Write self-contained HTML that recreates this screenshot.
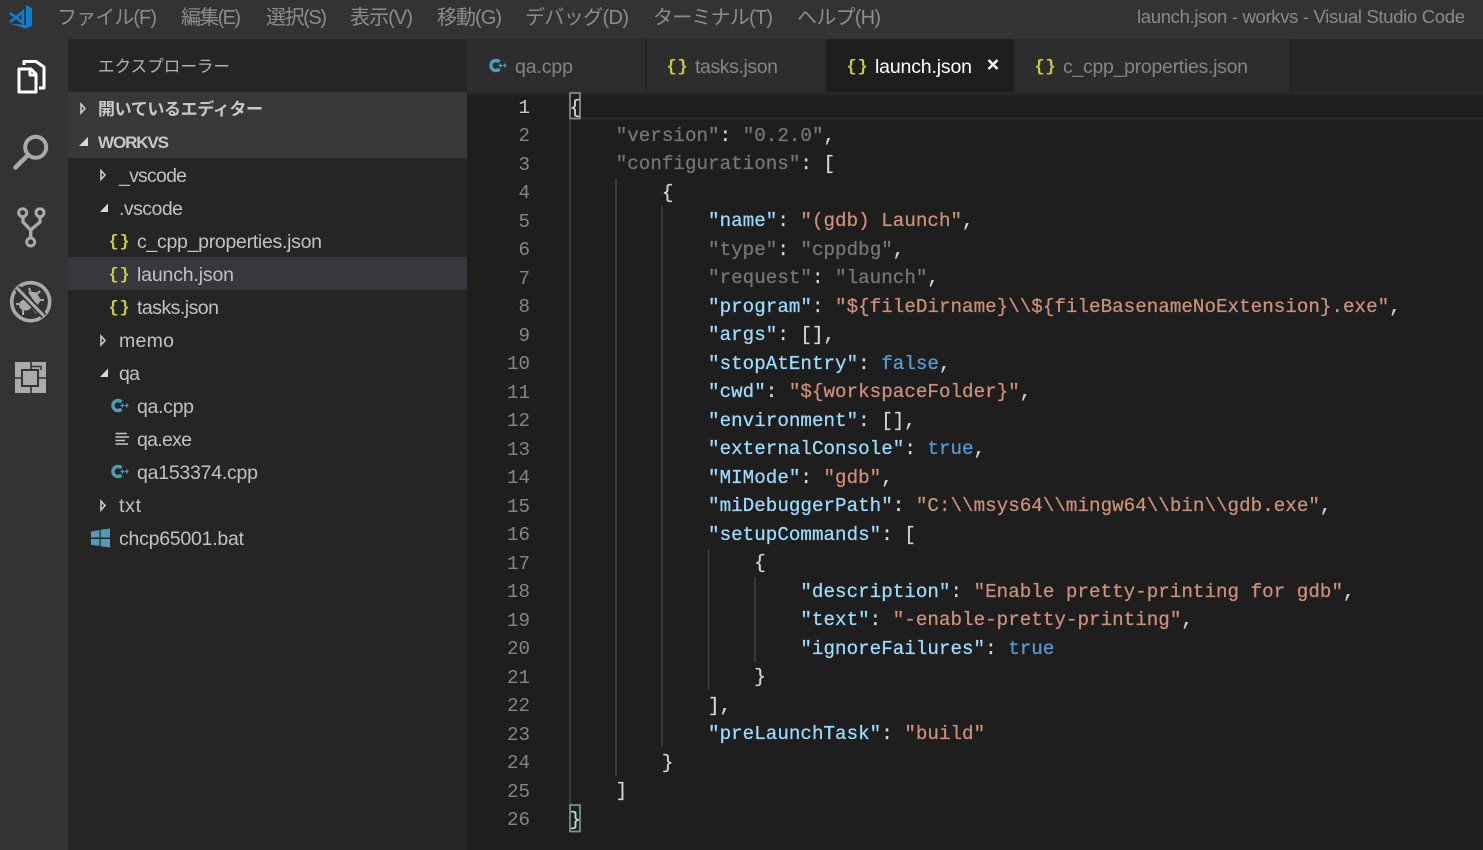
<!DOCTYPE html>
<html><head><meta charset="utf-8"><style>
html,body{margin:0;padding:0;background:#1e1e1e;width:1483px;height:850px;overflow:hidden}
svg{position:absolute;left:0;top:0}
.m{font:20px "Liberation Sans","Noto Sans CJK JP",sans-serif;fill:#8c8c8c}
.t{font:19.5px "Liberation Sans",sans-serif;fill:#c2c2c2}
.b{font:bold 17px "Liberation Sans","Noto Sans CJK JP",sans-serif;fill:#c8c8c8}
.tab{font:19.5px "Liberation Sans",sans-serif;fill:#858585}
.br{font:bold 17px "Liberation Mono",monospace;fill:#cbcb41}
.n{font:19.2px "Liberation Mono",monospace;fill:#858585;text-anchor:end}
pre{position:absolute;left:569.5px;top:93.5px;margin:0;font:19.2px/28.48px "Liberation Mono",monospace;letter-spacing:.03px;color:#d4d4d4;white-space:pre;-webkit-text-stroke:.25px}
i{font-style:normal;color:#9cdcfe}u{text-decoration:none;color:#ce9178}s{text-decoration:none;color:#777}b{font-weight:normal;color:#569cd6}
</style></head><body>
<svg width="1483" height="850" viewBox="0 0 1483 850">
<rect width="1483" height="850" fill="#1e1e1e"/>
<rect width="1483" height="39" fill="#333"/>
<rect y="39" width="68" height="811" fill="#333"/>
<rect x="68" y="39" width="399" height="811" fill="#252526"/>
<rect x="68" y="92" width="399" height="66" fill="#383838"/>
<rect x="68" y="257" width="399" height="33" fill="#37373d"/>
<rect x="467" y="39" width="1016" height="53" fill="#252526"/>
<rect x="467" y="39" width="178" height="53" fill="#2d2d2d"/>
<rect x="647" y="39" width="178" height="53" fill="#2d2d2d"/>
<rect x="827" y="39" width="186" height="53" fill="#1e1e1e"/>
<rect x="1015" y="39" width="274" height="53" fill="#2d2d2d"/>
<rect x="467" y="92" width="1016" height="3" fill="#282828"/>
<rect x="569" y="117" width="914" height="3" fill="#282828"/>

<!-- logo -->
<path d="M26 5 L32 8 V25.500 L26 28.500 L9 23.500 L26 25 Z" fill="#0e7fd0"/>
<path d="M10 13 L16 17.500 L10 22 M16 17.500 L23 11.500 V23 Z" fill="none" stroke="#0e7fd0" stroke-width="2.500"/>
<!-- menu -->
<g class="m">
<text x="57" y="24" textLength="100" lengthAdjust="spacing">ファイル(F)</text>
<text x="181" y="24" textLength="60" lengthAdjust="spacing">編集(E)</text>
<text x="266" y="24" textLength="61" lengthAdjust="spacing">選択(S)</text>
<text x="350" y="24" textLength="63" lengthAdjust="spacing">表示(V)</text>
<text x="437" y="24" textLength="65" lengthAdjust="spacing">移動(G)</text>
<text x="525" y="24" textLength="104" lengthAdjust="spacing">デバッグ(D)</text>
<text x="653" y="24" textLength="120" lengthAdjust="spacing">ターミナル(T)</text>
<text x="797" y="24" textLength="84" lengthAdjust="spacing">ヘルプ(H)</text>
</g>
<text x="1137" y="23" textLength="328" lengthAdjust="spacing" style="font:18.5px 'Liberation Sans',sans-serif;fill:#8a8a8a">launch.json - workvs - Visual Studio Code</text>

<!-- activity icons -->
<g fill="none" stroke="#fff" stroke-width="3">
<path d="M31 69 H19 V92 H36 V74 Z M30 69 V75 H36" stroke-linejoin="round"/>
<path d="M24 65 V61.500 H36 L44 67 V88 H39" stroke-linejoin="round"/>
</g>
<g fill="none" stroke="#a9a9a9">
<circle cx="35.700" cy="147.300" r="10.500" stroke-width="4"/>
<path d="M28 155 L15.500 167.500" stroke-width="4.500" stroke-linecap="round"/>
<circle cx="22.700" cy="212.700" r="4" stroke-width="3"/>
<circle cx="40" cy="212.700" r="4" stroke-width="3"/>
<circle cx="30.700" cy="242" r="4" stroke-width="3"/>
<path d="M23 217 V222 L30.700 230 V238 M40 217 V222 L30.700 230" stroke-width="3.400"/>
<circle cx="30.700" cy="301.700" r="19" stroke-width="3.600"/>
</g>
<ellipse cx="25.500" cy="305" rx="6.500" ry="5.500" fill="#a9a9a9"/>
<path d="M28 292 L36 292 L41 300 L37 306 Z" fill="#a9a9a9"/>
<path d="M29 288 L31 293 M40 291 L37 294 M40 300 H44 M33 308 L37 313 M23 310 L23 315 M19 304 H16" stroke="#a9a9a9" stroke-width="2" fill="none"/>
<path d="M17 288 L44 316" stroke="#333" stroke-width="6.500"/>
<path d="M17 288 L44 316" stroke="#a9a9a9" stroke-width="3"/>
<rect x="15" y="362" width="31" height="31" fill="#ababab"/>
<path d="M31 362 V370 M31 386 V393 M39 378 H46 M15 378 H22 M31 366.500 H41 V370" fill="none" stroke="#333" stroke-width="1.600"/>
<rect x="22" y="370" width="16" height="16" fill="#ababab" stroke="#333" stroke-width="2"/>

<!-- sidebar headers -->
<text x="98" y="72" textLength="132" lengthAdjust="spacing" style="font:16.500px 'Liberation Sans','Noto Sans CJK JP',sans-serif;fill:#b4b4b4">エクスプローラー</text>
<text class="b" x="98" y="115" textLength="165" lengthAdjust="spacing">開いているエディター</text>
<text class="b" x="98" y="148" textLength="71" lengthAdjust="spacing">WORKVS</text>
<path d="M81 104 L85 108.500 L81 113 Z" fill="none" stroke="#d0d0d0" stroke-width="1.500"/>
<path d="M88 137 V146 H79 Z" fill="#d8d8d8"/>

<!-- tree -->
<g fill="none" stroke="#d0d0d0" stroke-width="1.500">
<path d="M101 170.500 L105 175 L101 179.500 Z"/>
<path d="M101 336 L105 340.500 L101 345 Z"/>
<path d="M101 501 L105 505.500 L101 510 Z"/>
</g>
<path d="M108 203.500 V212 H100 Z M108 368.500 V377 H100 Z" fill="#d8d8d8"/>
<g class="t">
<text x="119" y="182" textLength="68" lengthAdjust="spacing">_vscode</text>
<text x="119" y="215" textLength="64" lengthAdjust="spacing">.vscode</text>
<text x="137" y="248" textLength="185" lengthAdjust="spacing">c_cpp_properties.json</text>
<text x="137" y="281" textLength="97" lengthAdjust="spacing">launch.json</text>
<text x="137" y="314" textLength="82" lengthAdjust="spacing">tasks.json</text>
<text x="119" y="347" textLength="55" lengthAdjust="spacing">memo</text>
<text x="119" y="380" textLength="21" lengthAdjust="spacing">qa</text>
<text x="137" y="413" textLength="57" lengthAdjust="spacing">qa.cpp</text>
<text x="137" y="446" textLength="55" lengthAdjust="spacing">qa.exe</text>
<text x="137" y="479" textLength="121" lengthAdjust="spacing">qa153374.cpp</text>
<text x="119" y="512" textLength="22" lengthAdjust="spacing">txt</text>
<text x="119" y="545" textLength="125" lengthAdjust="spacing">chcp65001.bat</text>
</g>
<g class="br">
<text x="108.500 119.500" y="246">{}</text>
<text x="108.500 119.500" y="279">{}</text>
<text x="108.500 119.500" y="312">{}</text>
<text x="666.500 677.500" y="71">{}</text>
<text x="846.500 857.500" y="71">{}</text>
<text x="1034.500 1045.500" y="71">{}</text>
</g>
<g fill="none" stroke="#519aba">
<g transform="translate(117.500 405.500)"><path d="M4 -3.500 A5 5 0 1 0 4 3.500" stroke-width="3.400"/><path d="M3 0 H7 M5 -2 V2 M7.500 0 H11 M9.300 -2 V2" stroke-width="1.300"/></g>
<g transform="translate(117.500 471.500)"><path d="M4 -3.500 A5 5 0 1 0 4 3.500" stroke-width="3.400"/><path d="M3 0 H7 M5 -2 V2 M7.500 0 H11 M9.300 -2 V2" stroke-width="1.300"/></g>
<g transform="translate(495.500 65.500)"><path d="M4 -3.500 A5 5 0 1 0 4 3.500" stroke-width="3.400"/><path d="M3 0 H7 M5 -2 V2 M7.500 0 H11 M9.300 -2 V2" stroke-width="1.300"/></g>
</g>
<path d="M115.500 433.500 H127 M115.500 437 H129 M115.500 440.500 H125 M115.500 444 H128" stroke="#c8c8c8" stroke-width="1.500"/>
<path d="M91 531.500 L99.500 530 V537.500 H91 Z M100.700 529.800 L110 528.500 V537.500 H100.700 Z M91 539 H99.500 V546 L91 544.800 Z M100.700 539 H110 V547.500 L100.700 546.200 Z" fill="#519aba"/>

<!-- tabs -->
<text class="tab" x="515" y="73" textLength="58" lengthAdjust="spacing">qa.cpp</text>
<text class="tab" x="695" y="73" textLength="83" lengthAdjust="spacing">tasks.json</text>
<text class="tab" x="875" y="73" textLength="97" lengthAdjust="spacing" style="fill:#fff">launch.json</text>
<text class="tab" x="1063" y="73" textLength="185" lengthAdjust="spacing">c_cpp_properties.json</text>
<path d="M988.500 60 L997.500 69 M997.500 60 L988.500 69" stroke="#f0f0f0" stroke-width="2.600"/>

<!-- guides -->
<g stroke="#404040" stroke-width="1.500">
<path d="M570 120 V804"/>
<path d="M616 178 V776"/>
<path d="M662 206 V747"/>
<path d="M708.500 549 V690"/>
<path d="M755 577 V662"/>
</g>
<!-- bracket boxes -->
<rect x="570" y="93" width="10" height="25.500" fill="#1e1e1e" stroke="#888" stroke-width="1.800"/>
<rect x="570" y="805" width="10" height="26.500" fill="#0e2a1a" stroke="#888" stroke-width="1.800"/>

<!-- line numbers -->
<g class="n">
<text x="530" y="113" style="fill:#c6c6c6">1</text>
<text x="530" y="141">2</text><text x="530" y="170">3</text><text x="530" y="198">4</text>
<text x="530" y="227">5</text><text x="530" y="255">6</text><text x="530" y="284">7</text>
<text x="530" y="312">8</text><text x="530" y="341">9</text><text x="530" y="369">10</text>
<text x="530" y="398">11</text><text x="530" y="426">12</text><text x="530" y="455">13</text>
<text x="530" y="483">14</text><text x="530" y="512">15</text><text x="530" y="540">16</text>
<text x="530" y="569">17</text><text x="530" y="597">18</text><text x="530" y="626">19</text>
<text x="530" y="654">20</text><text x="530" y="683">21</text><text x="530" y="711">22</text>
<text x="530" y="740">23</text><text x="530" y="768">24</text><text x="530" y="797">25</text>
<text x="530" y="825">26</text>
</g>
</svg>
<pre>{
    <s>"version"</s>: <s>"0.2.0"</s>,
    <s>"configurations"</s>: [
        {
            <i>"name"</i>: <u>"(gdb) Launch"</u>,
            <s>"type"</s>: <s>"cppdbg"</s>,
            <s>"request"</s>: <s>"launch"</s>,
            <i>"program"</i>: <u>"${fileDirname}\\${fileBasenameNoExtension}.exe"</u>,
            <i>"args"</i>: [],
            <i>"stopAtEntry"</i>: <b>false</b>,
            <i>"cwd"</i>: <u>"${workspaceFolder}"</u>,
            <i>"environment"</i>: [],
            <i>"externalConsole"</i>: <b>true</b>,
            <i>"MIMode"</i>: <u>"gdb"</u>,
            <i>"miDebuggerPath"</i>: <u>"C:\\msys64\\mingw64\\bin\\gdb.exe"</u>,
            <i>"setupCommands"</i>: [
                {
                    <i>"description"</i>: <u>"Enable pretty-printing for gdb"</u>,
                    <i>"text"</i>: <u>"-enable-pretty-printing"</u>,
                    <i>"ignoreFailures"</i>: <b>true</b>
                }
            ],
            <i>"preLaunchTask"</i>: <u>"build"</u>
        }
    ]
}</pre>
</body></html>
